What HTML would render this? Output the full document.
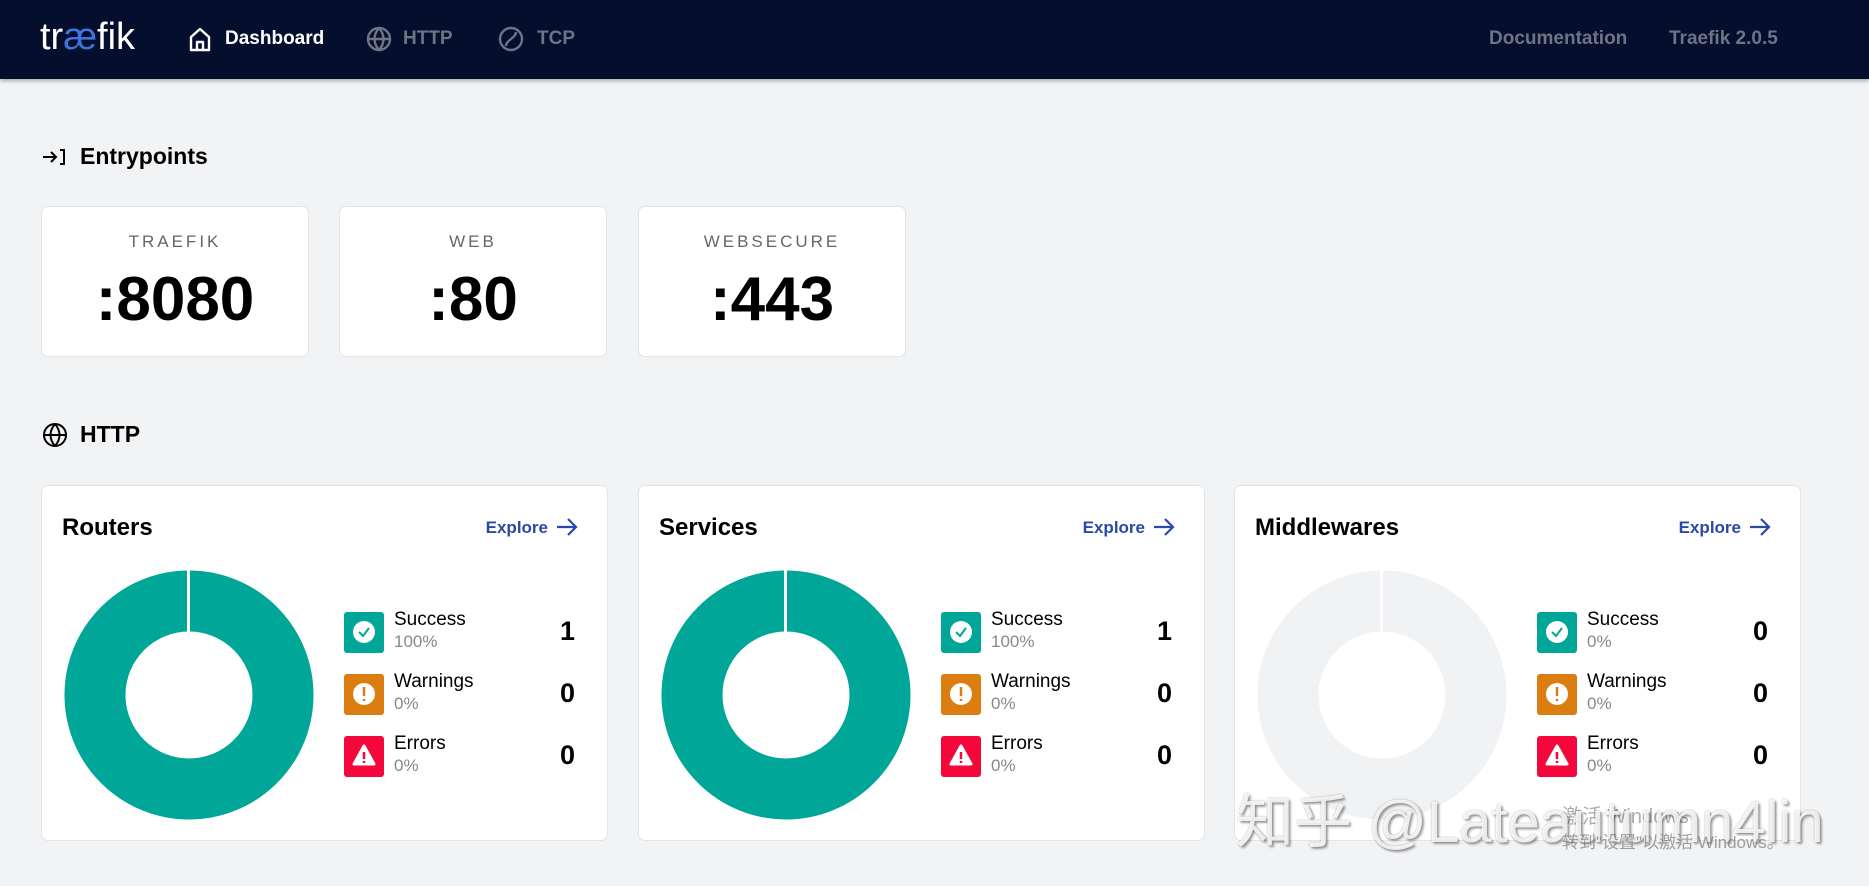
<!DOCTYPE html>
<html><head><meta charset="utf-8"><style>
*{margin:0;padding:0;box-sizing:border-box}
body{width:1869px;height:886px;background:#f2f3f5;font-family:"Liberation Sans","Noto Sans CJK SC",sans-serif;position:relative;overflow:hidden;color:#000}
.nav{position:absolute;left:0;top:0;width:1869px;height:79px;background:#050f2d;box-shadow:0 2px 4px rgba(0,0,0,.3)}
.nav .t{position:absolute;top:28px;font-size:19px;font-weight:bold;color:#6e7485}
.logo{position:absolute;left:40px;top:16px;font-size:38px;color:#fff}
.logo span{color:#3f73dd}
.h{position:absolute;left:80px;font-size:23px;font-weight:bold}
.ep{position:absolute;top:206px;width:268px;height:151px;background:#fff;border:1px solid #e2e4e8;border-radius:7px;text-align:center}
.ep .l{margin-top:25px;font-size:17px;letter-spacing:3px;color:#666}
.ep .n{margin-top:12px;font-size:62px;font-weight:bold}
.card{position:absolute;top:485px;width:567px;height:356px;background:#fff;border:1px solid #e2e4e8;border-radius:7px}
.card .ti{position:absolute;left:20px;top:28px;font-size:24px;font-weight:bold}
.card .ex{position:absolute;right:29px;top:32px;font-size:17px;color:#2a49a8;font-weight:bold}
.card .ex svg{vertical-align:-3px;margin-left:8px}
.card svg.d{position:absolute;left:22px;top:84px}
.row{position:absolute;left:302px;width:231px;height:42px}
.ic{position:absolute;left:0;top:0;width:40px;height:41px;border-radius:3px}
.row .a{position:absolute;left:50px;top:-3px;font-size:19px}
.row .b{position:absolute;left:50px;top:20px;font-size:17px;color:#888}
.row .c{position:absolute;right:0;top:4px;font-size:27px;font-weight:bold}
</style></head><body>
<div class="nav">
<div class="logo">tr<span>æ</span>fik</div>
<svg style="position:absolute;left:188px;top:26px" width="24" height="26" viewBox="0 0 24 26"><path d="M3 11 L12 3 L21 11 V24 H3 Z M9 24 V16 H15 V24" fill="none" stroke="#fff" stroke-width="2.4" stroke-linejoin="round"/></svg>
<div class="t" style="left:225px;color:#fff">Dashboard</div>
<svg style="position:absolute;left:366px;top:26px" width="26" height="26" viewBox="0 0 26 26" fill="none" stroke="#6e7485" stroke-width="2.4"><circle cx="13" cy="13" r="11"/><path d="M2 13H24M13 2C7 9 7 17 13 24M13 2C19 9 19 17 13 24"/></svg>
<div class="t" style="left:403px">HTTP</div>
<svg style="position:absolute;left:498px;top:26px" width="26" height="26" viewBox="0 0 26 26" fill="none" stroke="#6e7485" stroke-width="2.4"><circle cx="13" cy="13" r="11"/><path d="M8 20C8 14 18 12 18 6"/></svg>
<div class="t" style="left:537px">TCP</div>
<div class="t" style="left:1489px">Documentation</div>
<div class="t" style="left:1669px">Traefik 2.0.5</div>
</div>
<svg style="position:absolute;left:42px;top:148px" width="24" height="18" viewBox="0 0 24 18" fill="none" stroke="#000" stroke-width="2"><path d="M1 9H14M9 4L14 9L9 14M18 2H22V16H18"/></svg>
<div class="h" style="top:143px">Entrypoints</div>
<div class="ep" style="left:41px"><div class="l">TRAEFIK</div><div class="n">:8080</div></div>
<div class="ep" style="left:339px"><div class="l">WEB</div><div class="n">:80</div></div>
<div class="ep" style="left:638px"><div class="l">WEBSECURE</div><div class="n">:443</div></div>
<svg style="position:absolute;left:42px;top:422px" width="26" height="26" viewBox="0 0 26 26" fill="none" stroke="#000" stroke-width="2"><circle cx="13" cy="13" r="11"/><path d="M2 13H24M13 2C7 9 7 17 13 24M13 2C19 9 19 17 13 24"/></svg>
<div class="h" style="top:421px">HTTP</div>

<div class="card" style="left:41px">
<div class="ti">Routers</div><div class="ex">Explore<svg width="22" height="18" viewBox="0 0 22 18" fill="none" stroke="#2a49a8" stroke-width="2.2"><path d="M1 9H20M12 1L20 9L12 17"/></svg></div>
<svg class="d" width="250" height="250"><circle cx="125" cy="125" r="94" fill="none" stroke="#00a697" stroke-width="61"/><rect x="123" y="0" width="3" height="63" fill="#fff"/></svg>
<div class="row" style="top:126px"><div class="ic" style="background:#00a697"><svg width="40" height="41"><circle cx="20" cy="20" r="11" fill="#fff"/><path d="M15 20L19 24L25 16" fill="none" stroke="#00a697" stroke-width="2"/></svg></div><div class="a">Success</div><div class="b">100%</div><div class="c">1</div></div>
<div class="row" style="top:188px"><div class="ic" style="background:#db7d11"><svg width="40" height="41"><circle cx="20" cy="20" r="11" fill="#fff"/><path d="M20 13V22M20 25V27" stroke="#db7d11" stroke-width="2.5"/></svg></div><div class="a">Warnings</div><div class="b">0%</div><div class="c">0</div></div>
<div class="row" style="top:250px"><div class="ic" style="background:#f4083c"><svg width="40" height="41"><path d="M20 10L30 28H10Z" fill="#fff" stroke="#fff" stroke-linejoin="round" stroke-width="3"/><path d="M20 16V23M20 25V27" stroke="#f4083c" stroke-width="2.5"/></svg></div><div class="a">Errors</div><div class="b">0%</div><div class="c">0</div></div>
</div>

<div class="card" style="left:638px">
<div class="ti">Services</div><div class="ex">Explore<svg width="22" height="18" viewBox="0 0 22 18" fill="none" stroke="#2a49a8" stroke-width="2.2"><path d="M1 9H20M12 1L20 9L12 17"/></svg></div>
<svg class="d" width="250" height="250"><circle cx="125" cy="125" r="94" fill="none" stroke="#00a697" stroke-width="61"/><rect x="123" y="0" width="3" height="63" fill="#fff"/></svg>
<div class="row" style="top:126px"><div class="ic" style="background:#00a697"><svg width="40" height="41"><circle cx="20" cy="20" r="11" fill="#fff"/><path d="M15 20L19 24L25 16" fill="none" stroke="#00a697" stroke-width="2"/></svg></div><div class="a">Success</div><div class="b">100%</div><div class="c">1</div></div>
<div class="row" style="top:188px"><div class="ic" style="background:#db7d11"><svg width="40" height="41"><circle cx="20" cy="20" r="11" fill="#fff"/><path d="M20 13V22M20 25V27" stroke="#db7d11" stroke-width="2.5"/></svg></div><div class="a">Warnings</div><div class="b">0%</div><div class="c">0</div></div>
<div class="row" style="top:250px"><div class="ic" style="background:#f4083c"><svg width="40" height="41"><path d="M20 10L30 28H10Z" fill="#fff" stroke="#fff" stroke-linejoin="round" stroke-width="3"/><path d="M20 16V23M20 25V27" stroke="#f4083c" stroke-width="2.5"/></svg></div><div class="a">Errors</div><div class="b">0%</div><div class="c">0</div></div>
</div>

<div class="card" style="left:1234px">
<div class="ti">Middlewares</div><div class="ex">Explore<svg width="22" height="18" viewBox="0 0 22 18" fill="none" stroke="#2a49a8" stroke-width="2.2"><path d="M1 9H20M12 1L20 9L12 17"/></svg></div>
<svg class="d" width="250" height="250"><circle cx="125" cy="125" r="94" fill="none" stroke="#f1f2f4" stroke-width="61"/><rect x="123" y="0" width="3" height="63" fill="#fff"/></svg>
<div class="row" style="top:126px"><div class="ic" style="background:#00a697"><svg width="40" height="41"><circle cx="20" cy="20" r="11" fill="#fff"/><path d="M15 20L19 24L25 16" fill="none" stroke="#00a697" stroke-width="2"/></svg></div><div class="a">Success</div><div class="b">0%</div><div class="c">0</div></div>
<div class="row" style="top:188px"><div class="ic" style="background:#db7d11"><svg width="40" height="41"><circle cx="20" cy="20" r="11" fill="#fff"/><path d="M20 13V22M20 25V27" stroke="#db7d11" stroke-width="2.5"/></svg></div><div class="a">Warnings</div><div class="b">0%</div><div class="c">0</div></div>
<div class="row" style="top:250px"><div class="ic" style="background:#f4083c"><svg width="40" height="41"><path d="M20 10L30 28H10Z" fill="#fff" stroke="#fff" stroke-linejoin="round" stroke-width="3"/><path d="M20 16V23M20 25V27" stroke="#f4083c" stroke-width="2.5"/></svg></div><div class="a">Errors</div><div class="b">0%</div><div class="c">0</div></div>
</div>

<div style="position:absolute;left:1562px;top:800px;font-size:20px;color:rgba(120,120,120,.6);white-space:nowrap">激活 Windows</div>
<div style="position:absolute;left:1236px;top:775px;font-size:58px;color:rgba(255,255,255,.85);text-shadow:2px 2px 2px rgba(0,0,0,.35),0 0 2px rgba(0,0,0,.3);white-space:nowrap">知乎 @Lateautumn4lin</div>
<div style="position:absolute;left:1562px;top:828px;font-size:17px;color:rgba(120,120,120,.7);white-space:nowrap">转到"设置"以激活 Windows。</div>
</body></html>
